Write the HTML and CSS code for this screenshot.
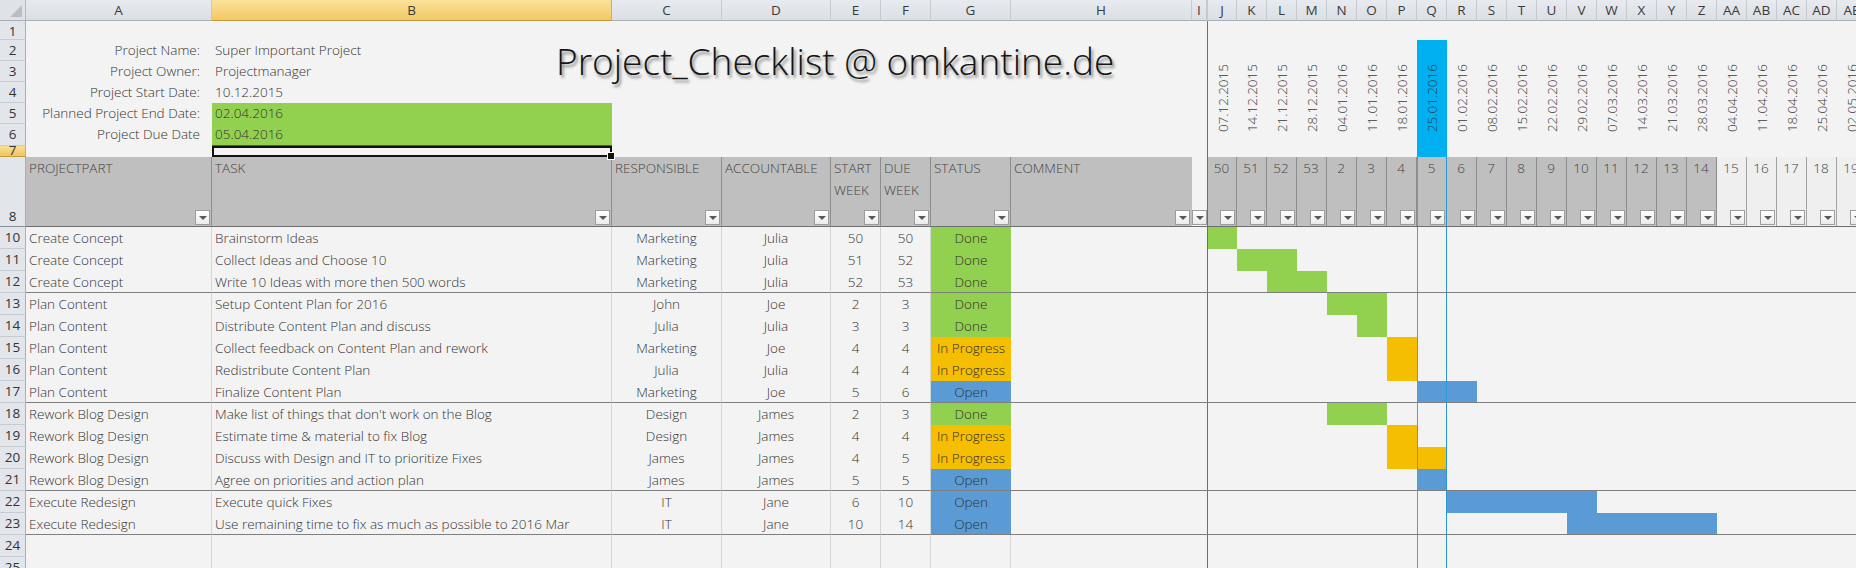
FILE: index.html
```html
<!DOCTYPE html>
<html lang="en">
<head>
<meta charset="utf-8">
<title>Project_Checklist</title>
<link rel="stylesheet" href="styles.css">
</head>
<body>
<div class="sheet">
  <div class="title">Project_Checklist @ omkantine.de</div>

  <!-- column headers -->
  <div class="row hdr">
    <div class="corner"><span class="tri"></span></div>
    <div class="ch">A</div><div class="ch sel">B</div><div class="ch">C</div><div class="ch">D</div><div class="ch">E</div><div class="ch">F</div><div class="ch">G</div><div class="ch">H</div><div class="ch">I</div>
    <div class="gantt ghdr">
      <div class="ch">J</div><div class="ch">K</div><div class="ch">L</div><div class="ch">M</div><div class="ch">N</div><div class="ch">O</div><div class="ch">P</div><div class="ch">Q</div><div class="ch">R</div><div class="ch">S</div><div class="ch">T</div><div class="ch">U</div><div class="ch">V</div><div class="ch">W</div><div class="ch">X</div><div class="ch">Y</div><div class="ch">Z</div><div class="ch">AA</div><div class="ch">AB</div><div class="ch">AC</div><div class="ch">AD</div><div class="ch">AE</div>
    </div>
  </div>

  <!-- rows 1-7 -->
  <div class="top">
    <div class="top-left">
      <div class="trow h19"><div class="rh">1</div></div>
      <div class="trow h21"><div class="rh">2</div><div class="lbl">Project Name:</div><div class="val">Super Important Project</div></div>
      <div class="trow h21"><div class="rh">3</div><div class="lbl">Project Owner:</div><div class="val">Projectmanager</div></div>
      <div class="trow h21"><div class="rh">4</div><div class="lbl">Project Start Date:</div><div class="val">10.12.2015</div></div>
      <div class="trow h21"><div class="rh">5</div><div class="lbl">Planned Project End Date:</div><div class="val green">02.04.2016</div></div>
      <div class="trow h22"><div class="rh">6</div><div class="lbl">Project Due Date</div><div class="val green last">05.04.2016</div></div>
      <div class="trow h11"><div class="rh selr">7</div><div class="lbl"></div><div class="val active"></div></div>
    </div>
    <div class="gantt gtop">
      <div class="d"><span>07.12.2015</span></div>
      <div class="d"><span>14.12.2015</span></div>
      <div class="d"><span>21.12.2015</span></div>
      <div class="d"><span>28.12.2015</span></div>
      <div class="d"><span>04.01.2016</span></div>
      <div class="d"><span>11.01.2016</span></div>
      <div class="d"><span>18.01.2016</span></div>
      <div class="d cur"><span>25.01.2016</span></div>
      <div class="d"><span>01.02.2016</span></div>
      <div class="d"><span>08.02.2016</span></div>
      <div class="d"><span>15.02.2016</span></div>
      <div class="d"><span>22.02.2016</span></div>
      <div class="d"><span>29.02.2016</span></div>
      <div class="d"><span>07.03.2016</span></div>
      <div class="d"><span>14.03.2016</span></div>
      <div class="d"><span>21.03.2016</span></div>
      <div class="d"><span>28.03.2016</span></div>
      <div class="d"><span>04.04.2016</span></div>
      <div class="d"><span>11.04.2016</span></div>
      <div class="d"><span>18.04.2016</span></div>
      <div class="d"><span>25.04.2016</span></div>
      <div class="d"><span>02.05.2016</span></div>
    </div>
  </div>

  <!-- row 8: table header -->
  <div class="row h8">
    <div class="rh rh8">8</div>
    <div class="hc"><span>PROJECTPART</span><i class="fb"></i></div>
    <div class="hc"><span>TASK</span><i class="fb"></i></div>
    <div class="hc"><span>RESPONSIBLE</span><i class="fb"></i></div>
    <div class="hc"><span>ACCOUNTABLE</span><i class="fb"></i></div>
    <div class="hc"><span>START WEEK</span><i class="fb"></i></div>
    <div class="hc"><span>DUE WEEK</span><i class="fb"></i></div>
    <div class="hc"><span>STATUS</span><i class="fb"></i></div>
    <div class="hc hlast"><span>COMMENT</span><i class="fb"></i></div>
    <div class="hc nofill"><i class="fb"></i></div>
    <div class="gantt gwk">
      <div class="wk"><span>50</span><i class="fb"></i></div>
      <div class="wk"><span>51</span><i class="fb"></i></div>
      <div class="wk"><span>52</span><i class="fb"></i></div>
      <div class="wk"><span>53</span><i class="fb"></i></div>
      <div class="wk"><span>2</span><i class="fb"></i></div>
      <div class="wk"><span>3</span><i class="fb"></i></div>
      <div class="wk"><span>4</span><i class="fb"></i></div>
      <div class="wk cur"><span>5</span><i class="fb"></i></div>
      <div class="wk"><span>6</span><i class="fb"></i></div>
      <div class="wk"><span>7</span><i class="fb"></i></div>
      <div class="wk"><span>8</span><i class="fb"></i></div>
      <div class="wk"><span>9</span><i class="fb"></i></div>
      <div class="wk"><span>10</span><i class="fb"></i></div>
      <div class="wk"><span>11</span><i class="fb"></i></div>
      <div class="wk"><span>12</span><i class="fb"></i></div>
      <div class="wk"><span>13</span><i class="fb"></i></div>
      <div class="wk"><span>14</span><i class="fb"></i></div>
      <div class="wk nf"><span>15</span><i class="fb"></i></div>
      <div class="wk nf"><span>16</span><i class="fb"></i></div>
      <div class="wk nf"><span>17</span><i class="fb"></i></div>
      <div class="wk nf"><span>18</span><i class="fb"></i></div>
      <div class="wk nf"><span>19</span><i class="fb"></i></div>
    </div>
  </div>

  <!-- data rows -->
  <div class="row dr">
    <div class="rh">10</div><div class="c">Create Concept</div><div class="c">Brainstorm Ideas</div><div class="c ctr">Marketing</div><div class="c ctr">Julia</div><div class="c ctr">50</div><div class="c ctr">50</div><div class="c ctr st done">Done</div><div class="c nb"></div><div class="c nb"></div>
    <div class="gantt gr"><div class="bar done" style="grid-column: 1 / span 1"></div><div class="q"></div></div>
  </div>
  <div class="row dr">
    <div class="rh">11</div><div class="c">Create Concept</div><div class="c">Collect Ideas and Choose 10</div><div class="c ctr">Marketing</div><div class="c ctr">Julia</div><div class="c ctr">51</div><div class="c ctr">52</div><div class="c ctr st done">Done</div><div class="c nb"></div><div class="c nb"></div>
    <div class="gantt gr"><div class="bar done" style="grid-column: 2 / span 2"></div><div class="q"></div></div>
  </div>
  <div class="row dr sep">
    <div class="rh">12</div><div class="c">Create Concept</div><div class="c">Write 10 Ideas with more then 500 words</div><div class="c ctr">Marketing</div><div class="c ctr">Julia</div><div class="c ctr">52</div><div class="c ctr">53</div><div class="c ctr st done">Done</div><div class="c nb"></div><div class="c nb"></div>
    <div class="gantt gr"><div class="bar done" style="grid-column: 3 / span 2"></div><div class="q"></div></div>
  </div>
  <div class="row dr">
    <div class="rh">13</div><div class="c">Plan Content</div><div class="c">Setup Content Plan for 2016</div><div class="c ctr">John</div><div class="c ctr">Joe</div><div class="c ctr">2</div><div class="c ctr">3</div><div class="c ctr st done">Done</div><div class="c nb"></div><div class="c nb"></div>
    <div class="gantt gr"><div class="bar done" style="grid-column: 5 / span 2"></div><div class="q"></div></div>
  </div>
  <div class="row dr">
    <div class="rh">14</div><div class="c">Plan Content</div><div class="c">Distribute Content Plan and discuss</div><div class="c ctr">Julia</div><div class="c ctr">Julia</div><div class="c ctr">3</div><div class="c ctr">3</div><div class="c ctr st done">Done</div><div class="c nb"></div><div class="c nb"></div>
    <div class="gantt gr"><div class="bar done" style="grid-column: 6 / span 1"></div><div class="q"></div></div>
  </div>
  <div class="row dr">
    <div class="rh">15</div><div class="c">Plan Content</div><div class="c">Collect feedback on Content Plan and rework</div><div class="c ctr">Marketing</div><div class="c ctr">Joe</div><div class="c ctr">4</div><div class="c ctr">4</div><div class="c ctr st prog">In Progress</div><div class="c nb"></div><div class="c nb"></div>
    <div class="gantt gr"><div class="bar prog" style="grid-column: 7 / span 1"></div><div class="q"></div></div>
  </div>
  <div class="row dr">
    <div class="rh">16</div><div class="c">Plan Content</div><div class="c">Redistribute Content Plan</div><div class="c ctr">Julia</div><div class="c ctr">Julia</div><div class="c ctr">4</div><div class="c ctr">4</div><div class="c ctr st prog">In Progress</div><div class="c nb"></div><div class="c nb"></div>
    <div class="gantt gr"><div class="bar prog" style="grid-column: 7 / span 1"></div><div class="q"></div></div>
  </div>
  <div class="row dr sep">
    <div class="rh">17</div><div class="c">Plan Content</div><div class="c">Finalize Content Plan</div><div class="c ctr">Marketing</div><div class="c ctr">Joe</div><div class="c ctr">5</div><div class="c ctr">6</div><div class="c ctr st open">Open</div><div class="c nb"></div><div class="c nb"></div>
    <div class="gantt gr"><div class="bar open" style="grid-column: 8 / span 2"></div><div class="q"></div></div>
  </div>
  <div class="row dr">
    <div class="rh">18</div><div class="c">Rework Blog Design</div><div class="c">Make list of things that don't work on the Blog</div><div class="c ctr">Design</div><div class="c ctr">James</div><div class="c ctr">2</div><div class="c ctr">3</div><div class="c ctr st done">Done</div><div class="c nb"></div><div class="c nb"></div>
    <div class="gantt gr"><div class="bar done" style="grid-column: 5 / span 2"></div><div class="q"></div></div>
  </div>
  <div class="row dr">
    <div class="rh">19</div><div class="c">Rework Blog Design</div><div class="c">Estimate time &amp; material to fix Blog</div><div class="c ctr">Design</div><div class="c ctr">James</div><div class="c ctr">4</div><div class="c ctr">4</div><div class="c ctr st prog">In Progress</div><div class="c nb"></div><div class="c nb"></div>
    <div class="gantt gr"><div class="bar prog" style="grid-column: 7 / span 1"></div><div class="q"></div></div>
  </div>
  <div class="row dr">
    <div class="rh">20</div><div class="c">Rework Blog Design</div><div class="c">Discuss with Design and IT to prioritize Fixes</div><div class="c ctr">James</div><div class="c ctr">James</div><div class="c ctr">4</div><div class="c ctr">5</div><div class="c ctr st prog">In Progress</div><div class="c nb"></div><div class="c nb"></div>
    <div class="gantt gr"><div class="bar prog" style="grid-column: 7 / span 2"></div><div class="q"></div></div>
  </div>
  <div class="row dr sep">
    <div class="rh">21</div><div class="c">Rework Blog Design</div><div class="c">Agree on priorities and action plan</div><div class="c ctr">James</div><div class="c ctr">James</div><div class="c ctr">5</div><div class="c ctr">5</div><div class="c ctr st open">Open</div><div class="c nb"></div><div class="c nb"></div>
    <div class="gantt gr"><div class="bar open" style="grid-column: 8 / span 1"></div><div class="q"></div></div>
  </div>
  <div class="row dr">
    <div class="rh">22</div><div class="c">Execute Redesign</div><div class="c">Execute quick Fixes</div><div class="c ctr">IT</div><div class="c ctr">Jane</div><div class="c ctr">6</div><div class="c ctr">10</div><div class="c ctr st open">Open</div><div class="c nb"></div><div class="c nb"></div>
    <div class="gantt gr"><div class="bar open" style="grid-column: 9 / span 5"></div><div class="q"></div></div>
  </div>
  <div class="row dr sep">
    <div class="rh">23</div><div class="c">Execute Redesign</div><div class="c">Use remaining time to fix as much as possible to 2016 Mar</div><div class="c ctr">IT</div><div class="c ctr">Jane</div><div class="c ctr">10</div><div class="c ctr">14</div><div class="c ctr st open">Open</div><div class="c nb"></div><div class="c nb"></div>
    <div class="gantt gr"><div class="bar open" style="grid-column: 13 / span 5"></div><div class="q"></div></div>
  </div>
  <div class="row dr">
    <div class="rh">24</div><div class="c"></div><div class="c"></div><div class="c"></div><div class="c"></div><div class="c"></div><div class="c"></div><div class="c"></div><div class="c nb"></div><div class="c nb"></div>
    <div class="gantt gr"><div class="q"></div></div>
  </div>
  <div class="row dr">
    <div class="rh">25</div><div class="c"></div><div class="c"></div><div class="c"></div><div class="c"></div><div class="c"></div><div class="c"></div><div class="c"></div><div class="c nb"></div><div class="c nb"></div>
    <div class="gantt gr"><div class="q"></div></div>
  </div>
</div>
</body>
</html>
```
FILE: styles.css
```css
html, body {
  margin: 0;
  padding: 0;
}
body {
  width: 1856px;
  height: 568px;
  overflow: hidden;
  background: #f3f3f3;
  font-family: "Open Sans", "Noto Sans", sans-serif;
  font-size: 13.5px;
  font-weight: 300;
  color: #333;
}
* { box-sizing: border-box; }

.sheet {
  position: relative;
  width: 1856px;
}

/* shared column template: rowhdr A B C D E F G H I | gantt */
.row {
  display: grid;
  grid-template-columns: 26px 186px 400px 110px 109px 50px 50px 80px 181px 15px 660px;
}

/* ---------- column header ---------- */
.hdr { height: 21px; }
.corner {
  background: #dfe2e6;
  border-right: 1px solid #b4bac2;
  border-bottom: 1px solid #a8afb8;
  display: flex;
  align-items: flex-end;
  justify-content: flex-end;
  padding: 0 3px 3px 0;
}
.tri {
  width: 0;
  height: 0;
  border-left: 12px solid transparent;
  border-bottom: 12px solid #b9bec5;
}
.ch {
  background: linear-gradient(#e7eaee, #dbdfe4);
  border-right: 1px solid #c4c9cf;
  border-bottom: 1px solid #a8afb8;
  text-align: center;
  line-height: 20px;
  font-size: 13.5px;
  font-weight: 400;
  color: #3a3a3a;
  overflow: hidden;
  white-space: nowrap;
}
.ch.sel {
  background: linear-gradient(#fae29a, #f2c863);
  border-right-color: #d3ad58;
  border-bottom-color: #c49a3c;
}

.gantt {
  display: grid;
  grid-template-columns: 29px repeat(21, 30px);
  border-left: 1px solid #6f6f6f;
}
.ghdr { border-left-color: #c4c9cf; }

/* ---------- rows 1-7 ---------- */
.top { display: flex; }
.top-left {
  width: 1207px;
  flex: none;
}
.trow {
  display: grid;
  grid-template-columns: 26px 186px 400px;
}
.h19 { height: 19px; }
.h21 { height: 21px; }
.h22 { height: 22px; }
.h11 { height: 11px; }

.rh {
  background: #e2e6eb;
  border-right: 1px solid #a8afb8;
  border-bottom: 1px solid #c6cbd2;
  text-align: center;
  font-size: 13.5px;
  font-weight: 400;
  color: #333;
  line-height: 21px;
  overflow: hidden;
}
.h11 .rh { line-height: 8px; }
.rh.selr {
  background: linear-gradient(#f9df93, #f1c660);
  border-bottom-color: #c49a3c;
}
.lbl {
  text-align: right;
  padding-right: 12px;
  line-height: 21px;
  white-space: nowrap;
}
.val {
  padding-left: 3px;
  line-height: 21px;
  white-space: nowrap;
}
.val.green { background: #92d050; }
.val.last { border-bottom: 1px solid #6a3c9c; }
.val.active {
  position: relative;
  box-shadow: inset 0 0 0 2px #111;
}
.val.active::after {
  content: "";
  position: absolute;
  right: -3px;
  bottom: -3px;
  width: 6px;
  height: 6px;
  background: #111;
  border: 1px solid #fff;
}

.gtop {
  flex: none;
  width: 660px;
  height: 136px;
  padding-top: 19px;
}
.d {
  display: flex;
  align-items: center;
  justify-content: center;
  font-size: 13.5px;
  color: #3a3a3a;
}
.d span {
  writing-mode: vertical-rl;
  transform: rotate(180deg);
  white-space: nowrap;
}
.d.cur { background: #00b0f0; color: #1f3f55; }

/* ---------- row 8 (table header) ---------- */
.h8 { height: 70px; }
.rh8 {
  display: flex;
  align-items: flex-end;
  justify-content: center;
  line-height: 20px;
  border-bottom: 1px solid #8a9098;
}
.hc {
  background: #bfbfbf;
  border-right: 1px solid #8d8d8d;
  border-bottom: 1px solid #6e6e6e;
  display: flex;
  flex-direction: column;
  padding: 0 1px 1px 3px;
  line-height: 22px;
  color: #444;
  overflow: hidden;
}
.hc.hlast { border-right: none; padding-right: 2px; }
.hc.nofill {
  background: transparent;
  padding: 0 0 1px 0;
  border-right: none;
}
.fb {
  display: flex;
  align-items: center;
  justify-content: center;
  width: 15px;
  height: 15px;
  flex: none;
  margin-top: auto;
  align-self: flex-end;
  border: 1px solid #9d9d9d;
  background: linear-gradient(#ffffff, #ebebeb);
}
.fb::after {
  content: "";
  width: 0;
  height: 0;
  border-left: 4px solid transparent;
  border-right: 4px solid transparent;
  border-top: 4px solid #595959;
}
.gwk { border-bottom: 1px solid #6e6e6e; }
.wk {
  background: #bfbfbf;
  border-right: 1px solid #8d8d8d;
  display: flex;
  flex-direction: column;
  align-items: center;
  padding: 0 1px 1px 0;
  line-height: 22px;
  color: #444;
}
.wk.cur {
  border-left: 1px solid #1fb3ec;
  border-right: 1px solid #2a96d4;
}
.wk.nf {
  background: #efefef;
  border-right-color: #a3a3a3;
}

/* ---------- data rows ---------- */
.dr { height: 22px; }
.dr .rh { line-height: 21px; }
.c {
  border-right: 1px solid #d5d5d5;
  padding: 0 3px;
  line-height: 22px;
  white-space: nowrap;
  overflow: hidden;
}
.c.nb { border-right: none; }
.ctr { text-align: center; }
.st.done, .bar.done { background: #92d050; }
.st.prog, .bar.prog { background: #f5be00; }
.st.open, .bar.open { background: #5b9bd5; }
.st { border-right: none; color: #2f2f2f; }

.sep .c, .sep .gantt { border-bottom: 1px solid #7f7f7f; }

.gr > * { grid-row: 1; }
.q {
  grid-column: 8;
  border-left: 1px solid #1fb3ec;
  border-right: 1px solid #2a96d4;
}

/* ---------- title text box ---------- */
.title {
  position: absolute;
  left: 556px;
  top: 42px;
  font-size: 37px;
  line-height: 1;
  font-weight: 300;
  color: #141414;
  white-space: nowrap;
  text-shadow: 2px 3px 3px rgba(0, 0, 0, 0.45);
  z-index: 2;
}
```
